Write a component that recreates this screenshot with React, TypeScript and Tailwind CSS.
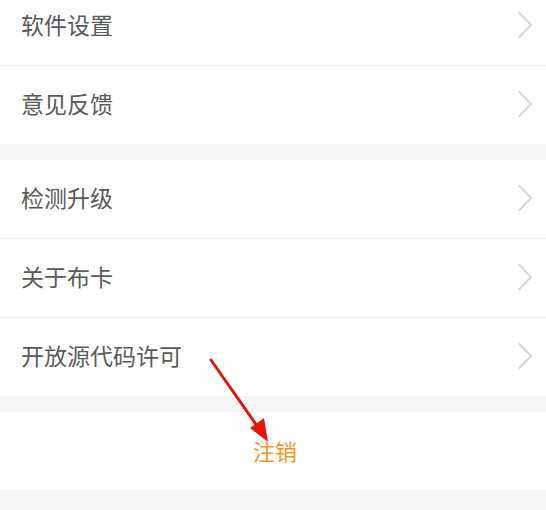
const groups = [
  ["软件设置", "意见反馈"],
  ["检测升级", "关于布卡", "开放源代码许可"],
];

function Chevron() {
  return (
    <svg width="16" height="28" viewBox="0 0 16 28" fill="none">
      <polyline points="2,1.5 14,14 2,26.5" stroke="#d6d6d6" strokeWidth="2" strokeLinejoin="miter" />
    </svg>
  );
}

function Row({ label, last }: { label: string; last: boolean }) {
  return (
    <div className={`flex items-center justify-between bg-white pb-[3px] pl-[21px] pr-[13px] ${last ? "h-[78px]" : "h-[79px] border-b border-[#f0f0f0]"}`}>
      <span className="text-[23px] leading-none text-[#5a5a5a]">{label}</span>
      <Chevron />
    </div>
  );
}

export default function App() {
  return (
    <div
      className="relative h-[510px] w-[546px] overflow-hidden bg-[#f5f5f5]"
      style={{ fontFamily: '"Noto Sans CJK SC", "Noto Sans", sans-serif' }}
    >
      <div className="-mt-[13px] flex flex-col gap-[16px]">
        {groups.map((items, gi) => (
          <div key={gi} className="flex flex-col">
            {items.map((label, i) => (
              <Row key={label} label={label} last={i === items.length - 1} />
            ))}
          </div>
        ))}
        <div className="flex h-[78px] items-center justify-center bg-white pb-[3px] pl-[4px]">
          <span className="text-[22px] leading-none text-[#f7941d]">注销</span>
        </div>
      </div>

      {/* annotation arrow */}
      <svg className="absolute left-0 top-0" width="546" height="510" viewBox="0 0 546 510">
        <line x1="211" y1="360" x2="260" y2="430" stroke="#e8150f" strokeWidth="3" strokeLinecap="round" />
        <polygon points="268,442 250,428 264,418" fill="#e8150f" />
      </svg>
    </div>
  );
}
